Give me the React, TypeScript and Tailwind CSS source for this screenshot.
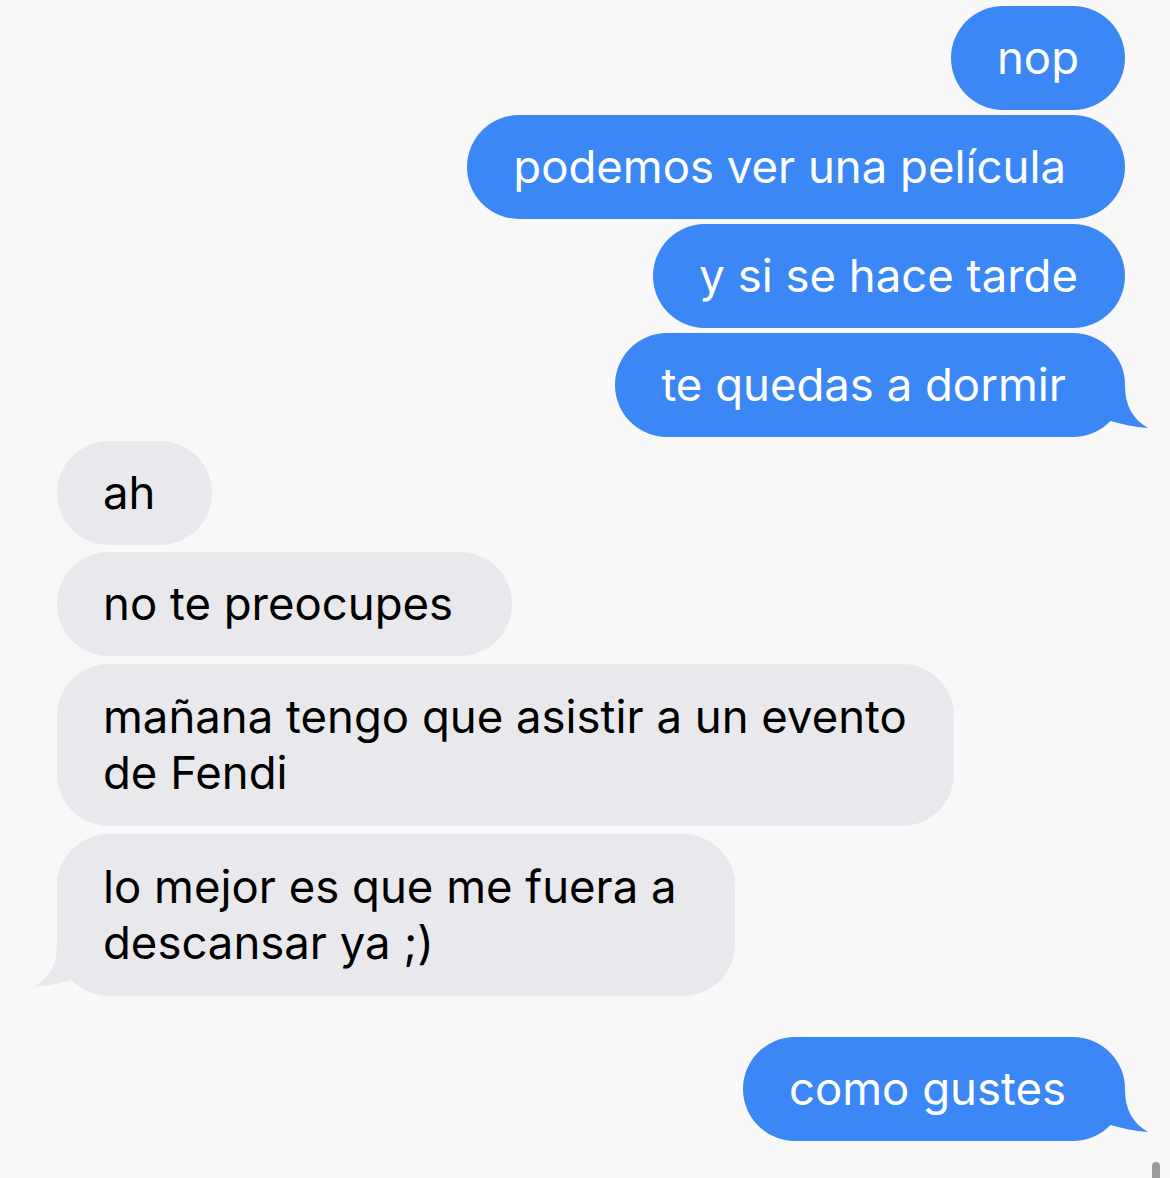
import React from "react";

type Msg = {
  from: "me" | "them";
  text: React.ReactNode;
  tail?: boolean;
  gap: string;
  pr: string;
  py: string;
};

const messages: Msg[] = [
  { from: "me", text: "nop", gap: "mt-[6px]", pr: "pr-[46px]", py: "py-6" },
  { from: "me", text: "podemos ver una película", gap: "mt-[5px]", pr: "pr-[59px]", py: "py-6" },
  { from: "me", text: "y si se hace tarde", gap: "mt-[5px]", pr: "pr-[47px]", py: "py-6" },
  { from: "me", text: "te quedas a dormir", tail: true, gap: "mt-[5px]", pr: "pr-[59px]", py: "py-6" },
  { from: "them", text: "ah", gap: "mt-[4px]", pr: "pr-[57px]", py: "py-6" },
  { from: "them", text: "no te preocupes", gap: "mt-[7px]", pr: "pr-[59px]", py: "py-6" },
  {
    from: "them",
    text: (
      <>
        mañana tengo que asistir a un evento
        <br />
        de Fendi
      </>
    ),
    gap: "mt-[8px]",
    pr: "pr-[47px]",
    py: "py-[25px]",
  },
  {
    from: "them",
    text: (
      <>
        lo mejor es que me fuera a
        <br />
        descansar ya ;)
      </>
    ),
    tail: true,
    gap: "mt-[8px]",
    pr: "pr-[58px]",
    py: "py-[25px]",
  },
  { from: "me", text: "como gustes", tail: true, gap: "mt-[41px]", pr: "pr-[59px]", py: "py-6" },
];

const BlueTail = () => (
  <svg
    className="absolute right-[-25px] bottom-[3px]"
    width="55"
    height="60"
    viewBox="0 0 55 60"
  >
    <path d="M0 12 L30 12 C30 30 37 45 53 54 C40 53 25 50 12 46 L0 46 Z" fill="#3b87f5" />
  </svg>
);

const GrayTail = () => (
  <svg
    className="absolute left-[-25px] bottom-[3px]"
    width="55"
    height="60"
    viewBox="0 0 55 60"
  >
    <path d="M55 12 L25 12 C25 30 18 45 2 54 C15 53 30 50 43 46 L55 46 Z" fill="#e9e8ed" />
  </svg>
);

const Bubble = ({ msg }: { msg: Msg }) => {
  const mine = msg.from === "me";
  return (
    <div className={`relative ${msg.gap} ${mine ? "self-end" : "self-start"}`}>
      {msg.tail && (mine ? <BlueTail /> : <GrayTail />)}
      <div
        className={`relative rounded-[52px] pl-[46px] ${msg.pr} ${msg.py} text-[45.5px] leading-[56px] ${
          mine ? "bg-[#3b87f5] text-white" : "bg-[#e9e8ed] text-black"
        }`}
      >
        {msg.text}
      </div>
    </div>
  );
};

const App = () => {
  return (
    <div
      className="relative h-[1178px] w-[1170px] overflow-hidden bg-[#f8f8f8]"
      style={{ fontFamily: "Inter, 'Noto Sans', sans-serif" }}
    >
      <div className="flex flex-col pl-[57px] pr-[45px]">
        {messages.map((m, i) => (
          <Bubble key={i} msg={m} />
        ))}
      </div>
      <div className="absolute right-[10px] top-[1162px] h-[30px] w-[8px] rounded-full bg-[#9b9b9b]" />
    </div>
  );
};

export default App;
